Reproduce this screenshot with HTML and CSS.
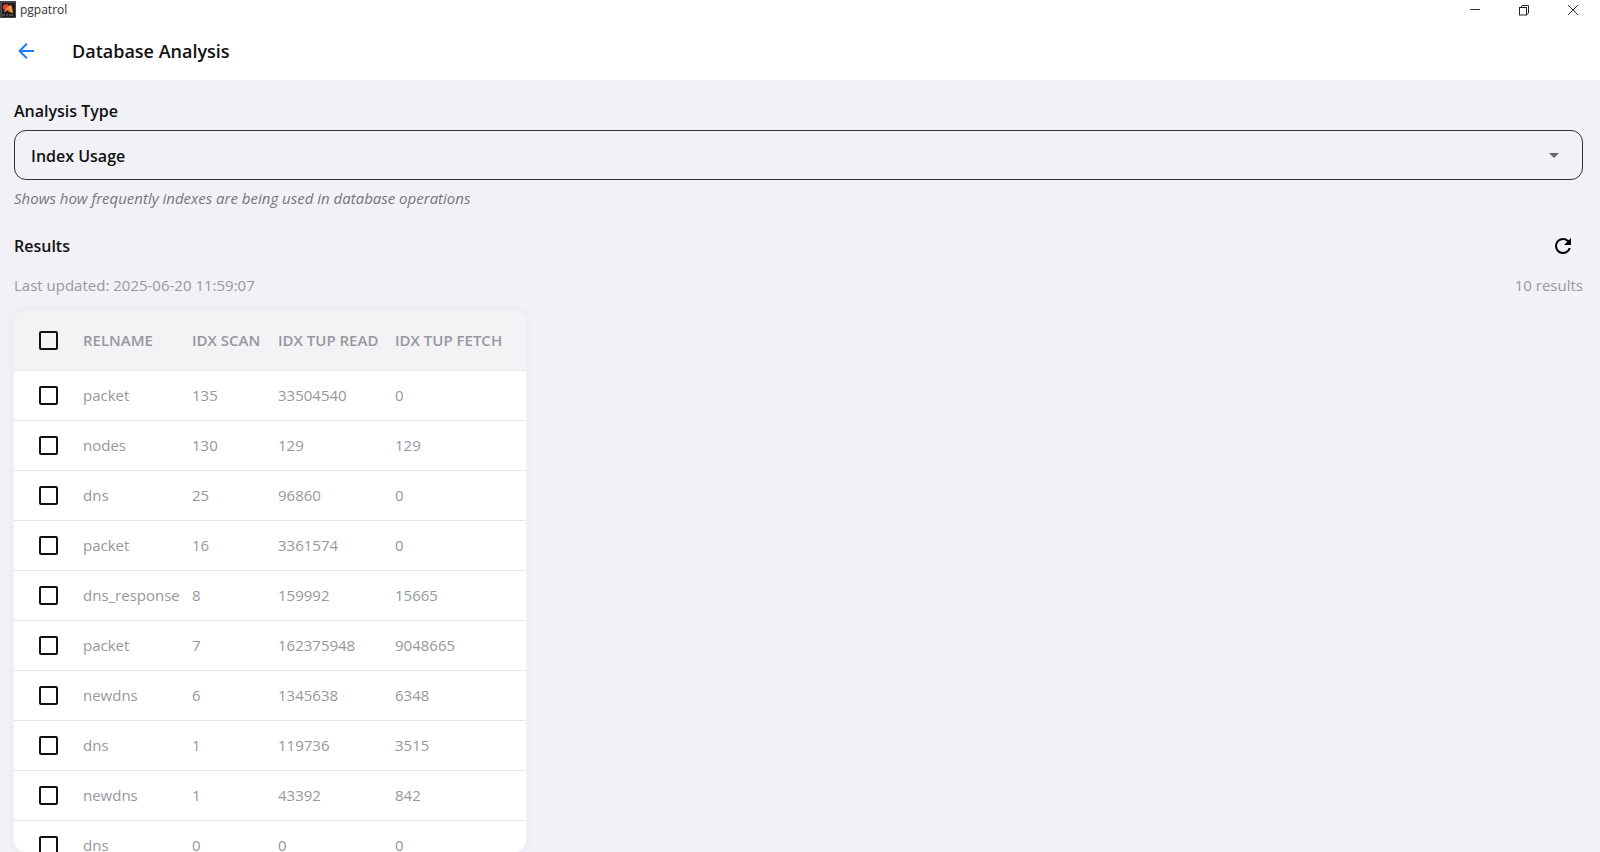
FILE: index.html
```html
<!DOCTYPE html>
<html lang="en">
<head>
<meta charset="utf-8">
<title>pgpatrol</title>
<link rel="stylesheet" href="styles.css">
</head>
<body>
<div class="window">
  <div class="titlebar">
    <svg class="app-icon" viewBox="0 0 16 17" aria-hidden="true"><rect width="16" height="17" fill="#454747"/><rect x="2" y="2" width="13" height="14" fill="#201b20"/><path d="M3 5l2-2 1 1 2-1v5l3 2-2 1-3-2-3-1z" fill="#ee4134"/><path d="M8 5l3-1 1 2 1 6-3-1-2-3-3 3-1-1 3-3z" fill="#e99a3d"/><path d="M2 14h3m1 0h2m1 0h4" stroke="#777" stroke-width="1"/></svg>
    <span class="app-name">pgpatrol</span>
    <div class="window-controls">
      <button type="button" aria-label="Minimize"><svg width="12" height="12" viewBox="0 0 12 12"><path d="M1 5.500h10" stroke="#333"/></svg></button>
      <button type="button" aria-label="Restore"><svg width="12" height="12" viewBox="0 0 12 12" fill="none" stroke="#222"><rect x="1.500" y="3.500" width="7" height="7.500"/><path d="M3 3.500L4 1.500h6.500V9L8.500 11"/></svg></button>
      <button type="button" aria-label="Close"><svg width="12" height="12" viewBox="0 0 12 12"><path d="M1 1l10 10M11 1L1 11" stroke="#333"/></svg></button>
    </div>
  </div>
  <header class="appbar">
    <button type="button" class="back" aria-label="Back"><svg width="24" height="24" viewBox="0 0 24 24"><path fill="#1a7dff" d="M20 11v2H8l5.500 5.500-1.420 1.420L4.160 12l7.920-7.920L13.500 5.500 8 11h12z"/></svg></button>
    <h1>Database Analysis</h1>
  </header>
  <main class="content">
    <label class="heading" for="analysis">Analysis Type</label>
    <div class="select-wrap">
      <select id="analysis"><option>Index Usage</option></select>
      <svg class="caret" width="24" height="24" viewBox="0 0 24 24" aria-hidden="true"><path d="M7 10l5 5 5-5z" fill="#666"/></svg>
    </div>
    <p class="hint">Shows how frequently indexes are being used in database operations</p>
    <div class="results-bar">
      <h2 class="heading">Results</h2>
      <button type="button" class="refresh" aria-label="Refresh"><svg width="24" height="24" viewBox="0 0 24 24"><path d="M17.650 6.350A7.958 7.958 0 0 0 12 4a8 8 0 1 0 7.730 10h-2.080A6 6 0 1 1 12 6c1.660 0 3.140.690 4.220 1.780L13 11h7V4z"/></svg></button>
    </div>
    <div class="meta"><span>Last updated: 2025-06-20 11:59:07</span><span>10 results</span></div>
    <div class="card">
      <table>
        <colgroup><col class="c-check"><col class="c-name"><col class="c-scan"><col class="c-read"><col class="c-fetch"></colgroup>
        <thead><tr><th><input type="checkbox" aria-label="Select all"></th><th>RELNAME</th><th>IDX SCAN</th><th>IDX TUP READ</th><th>IDX TUP FETCH</th></tr></thead>
        <tbody>
          <tr><td><input type="checkbox" aria-label="Select row 1"></td><td>packet</td><td>135</td><td>33504540</td><td>0</td></tr>
          <tr><td><input type="checkbox" aria-label="Select row 2"></td><td>nodes</td><td>130</td><td>129</td><td>129</td></tr>
          <tr><td><input type="checkbox" aria-label="Select row 3"></td><td>dns</td><td>25</td><td>96860</td><td>0</td></tr>
          <tr><td><input type="checkbox" aria-label="Select row 4"></td><td>packet</td><td>16</td><td>3361574</td><td>0</td></tr>
          <tr><td><input type="checkbox" aria-label="Select row 5"></td><td>dns_response</td><td>8</td><td>159992</td><td>15665</td></tr>
          <tr><td><input type="checkbox" aria-label="Select row 6"></td><td>packet</td><td>7</td><td>162375948</td><td>9048665</td></tr>
          <tr><td><input type="checkbox" aria-label="Select row 7"></td><td>newdns</td><td>6</td><td>1345638</td><td>6348</td></tr>
          <tr><td><input type="checkbox" aria-label="Select row 8"></td><td>dns</td><td>1</td><td>119736</td><td>3515</td></tr>
          <tr><td><input type="checkbox" aria-label="Select row 9"></td><td>newdns</td><td>1</td><td>43392</td><td>842</td></tr>
          <tr><td><input type="checkbox" aria-label="Select row 10"></td><td>dns</td><td>0</td><td>0</td><td>0</td></tr>
        </tbody>
      </table>
    </div>
  </main>
</div>
</body>
</html>
```
FILE: styles.css
```css
* { box-sizing: border-box; }
body {
  margin: 0;
  background: #f2f1f7;
  color: #111;
  font-family: "Open Sans", "Noto Sans", sans-serif;
  font-size: 15px;
}
button { border: 0; padding: 0; background: none; display: flex; align-items: center; justify-content: center; }
h1, h2, p { margin: 0; }
svg { display: block; }
.window { height: 100vh; display: flex; flex-direction: column; overflow: hidden; }
.titlebar { display: flex; align-items: center; gap: 4px; height: 19px; background: #fff; flex: none; }
.app-icon { width: 16px; height: 17px; }
.app-name { font-size: 12px; line-height: 19px; color: #333; }
.window-controls { margin-left: auto; display: flex; padding-right: 3px; }
.window-controls button { width: 49px; height: 19px; }
.appbar { display: flex; align-items: center; gap: 34px; height: 61px; padding: 3px 14px 0; background: #fff; flex: none; }
.appbar h1 { font-size: 18px; font-weight: 600; line-height: 24px; }
.content { flex: 1; min-height: 0; display: flex; flex-direction: column; padding: 20px 17px 0 14px; }
.heading { font-size: 16px; font-weight: 600; line-height: 22px; }
.select-wrap { position: relative; margin-top: 8px; }
select {
  display: block;
  width: 100%;
  height: 50px;
  padding: 2px 48px 0 16px;
  appearance: none;
  border: 1px solid #333;
  border-radius: 12px;
  background: transparent;
  color: #111;
  font: 600 16px "Open Sans", "Noto Sans", sans-serif;
}
.caret { position: absolute; right: 17px; top: 13px; pointer-events: none; }
.hint { margin-top: 8px; font-size: 15px; line-height: 20px; font-style: italic; color: #777; }
.results-bar { display: flex; align-items: center; justify-content: space-between; margin-top: 22px; height: 32px; padding-right: 8px; }
.meta { display: flex; justify-content: space-between; margin-top: 13px; line-height: 20px; color: #999; }
.card {
  flex: 1;
  min-height: 0;
  align-self: flex-start;
  margin-top: 16px;
  overflow: hidden;
  border-radius: 12px;
  background: #fff;
  box-shadow: 0 0 0 5px #efeef4;
}
table { width: 512px; table-layout: fixed; border-collapse: separate; border-spacing: 0; }
.c-check { width: 61px; }
.c-name { width: 109px; }
.c-scan { width: 86px; }
.c-read { width: 117px; }
th, td { height: 50px; padding: 0 8px 1px; border-bottom: 1px solid #e5e5ea; text-align: left; white-space: nowrap; color: #97979c; font-weight: 400; }
th { height: 60px; background: #f3f3f6; font-weight: 600; }
th:first-child, td:first-child { padding-left: 25px; }
input {
  display: block;
  appearance: none;
  width: 19px;
  height: 19px;
  margin: 0;
  border: 2px solid #111;
  border-radius: 2px;
}
```
